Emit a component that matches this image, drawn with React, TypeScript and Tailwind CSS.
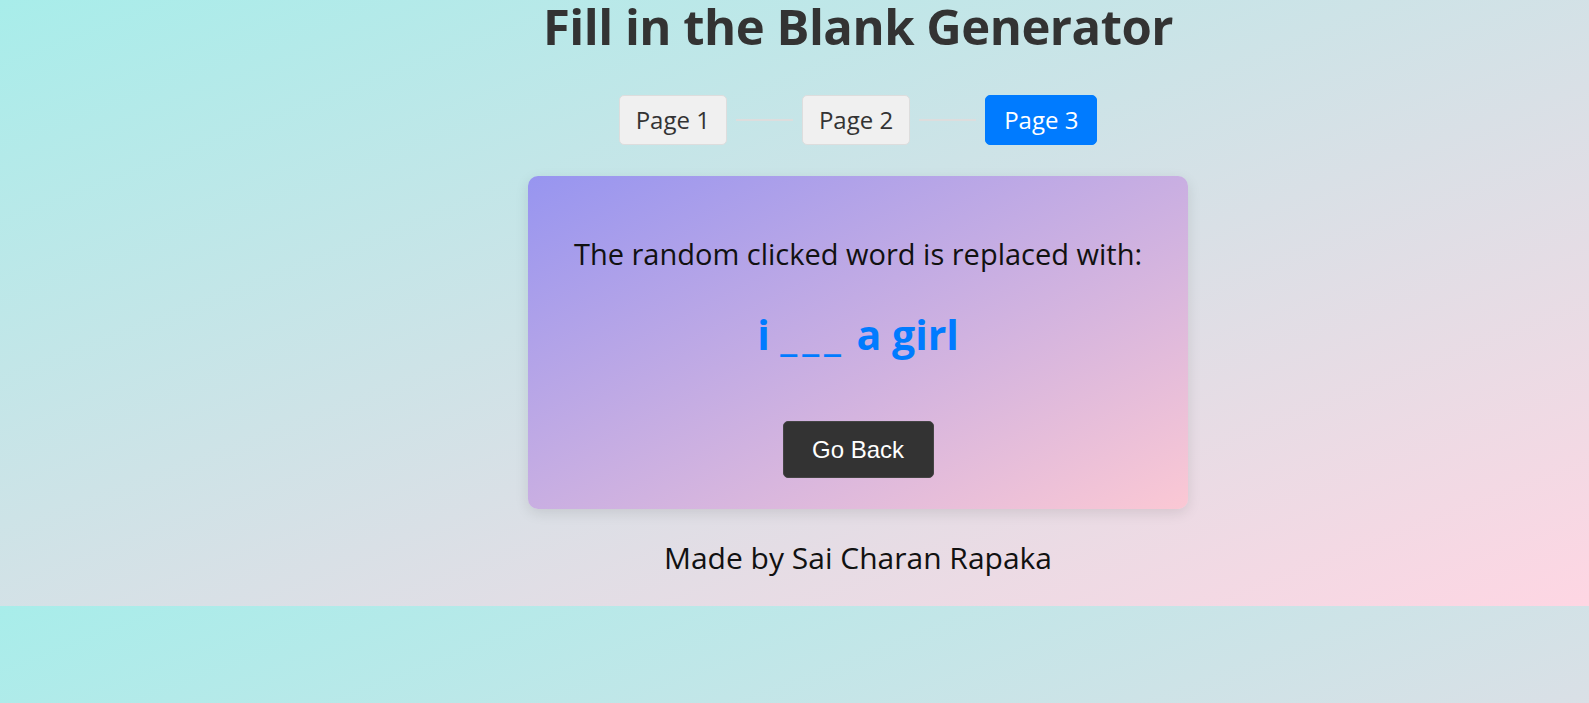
import React from "react";

const steps = ["Page 1", "Page 2", "Page 3"];
const active = 2;

export default function App() {
  return (
    <div className="h-screen w-full overflow-hidden bg-[linear-gradient(to_bottom_right,#a8edea,#fed6e3)] bg-[length:100%_606px] bg-repeat font-['Open_Sans',sans-serif]">
      <div className="h-[606px] pl-[127px] flex flex-col items-center">
        {/* Title */}
        <h1 className="text-[49px] leading-[52px] font-bold text-[#333] tracking-[-0.5px]">
          Fill in the Blank Generator
        </h1>

        {/* Step indicator */}
        <div className="mt-[43px] flex items-center">
          {steps.map((s, i) => (
            <React.Fragment key={s}>
              {i > 0 && <div className="mx-[9px] h-[2px] w-[57px] bg-[#dddddd]" />}
              <div
                className={
                  i === active
                    ? "h-[50px] rounded-[5px] border border-[#007bff] bg-[#007bff] px-[18px] text-white text-[24px] flex items-center justify-center"
                    : "h-[50px] rounded-[5px] border border-[#dddddd] bg-[#f0f0f0] px-[16px] text-[#333] text-[24px] flex items-center justify-center"
                }
              >
                {s}
              </div>
            </React.Fragment>
          ))}
        </div>

        {/* Card */}
        <div className="mt-[31px] h-[333px] w-[660px] rounded-[10px] bg-[linear-gradient(to_bottom_right,#9795f0,#fbc8d4)] shadow-[0_4px_14px_rgba(0,0,0,0.1)] flex flex-col items-center">
          <p className="mt-[60px] text-[29px] leading-[36px] text-[#111]">
            The random clicked word is replaced with:
          </p>
          <p className="mt-[40px] text-[41px] leading-[44px] font-bold text-[#007bff]">
            i <span className="tracking-[5px]">___</span> a girl
          </p>
          <button className="mt-[65px] h-[57px] w-[151px] rounded-[5px] border border-[#444] bg-[#333] text-white text-[24px] font-['Liberation_Sans',Arial,sans-serif]">
            Go Back
          </button>
        </div>

        {/* Footer */}
        <p className="mt-[31px] text-[30px] leading-[36px] text-[#111]">Made by Sai Charan Rapaka</p>
      </div>
    </div>
  );
}
